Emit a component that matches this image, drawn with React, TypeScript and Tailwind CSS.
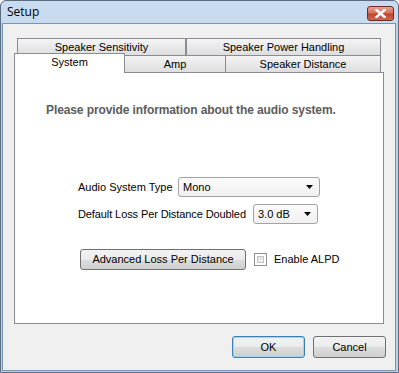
import React from "react";

const font = { fontFamily: '"Liberation Sans", Arial, sans-serif' };

function Tab({ label, className }: { label: string; className: string }) {
  return (
    <div
      className={
        "flex items-center justify-center text-[11px] text-black leading-none border-[#898c95] " +
        className
      }
    >
      {label}
    </div>
  );
}

function Select({ value, width }: { value: string; width: string }) {
  return (
    <div
      className={
        "h-[20px] rounded-[3px] border border-[#a3a3a3] bg-gradient-to-b from-[#fbfbfb] to-[#f0f0f0] flex items-center pl-[4px] pr-[6px] " +
        width
      }
    >
      <span className="flex-1 text-[11px] text-black">{value}</span>
      <svg width="7" height="4" viewBox="0 0 7 4">
        <path d="M0 0 H7 L3.5 4 Z" fill="#000" />
      </svg>
    </div>
  );
}

function Button({ label, className }: { label: string; className: string }) {
  return (
    <div
      className={
        "flex items-center justify-center rounded-[3px] border text-[11px] text-black bg-[linear-gradient(to_bottom,#f2f2f2_0%,#ebebeb_50%,#dddddd_51%,#cfcfcf_100%)] " +
        className
      }
    >
      {label}
    </div>
  );
}

export default function App() {
  return (
    <div style={font} className="w-[399px] h-[373px] bg-white">
      <div className="w-[399px] h-[373px] flex flex-col rounded-t-[6px] border border-[#5b6b80] bg-gradient-to-b from-[#c9dbef] to-[#b3cbe8] overflow-hidden">
        {/* Title bar */}
        <div className="h-[22px] flex items-center pl-[6px] pr-[4px]">
          <span className="flex-1 text-[12px] text-black" style={{ fontFamily: '"Open Sans", "Noto Sans", sans-serif' }}>
            Setup
          </span>
          <div className="w-[27px] h-[15px] mt-[2px] rounded-[3px] border border-[#6e2a22] bg-[linear-gradient(to_bottom,#e8a493_0%,#d2715e_45%,#c1432e_55%,#d06a50_100%)] flex items-center justify-center">
            <svg width="11" height="9" viewBox="0 0 11 9">
              <path d="M1.5 1 L9.5 8 M9.5 1 L1.5 8" stroke="#fff" strokeWidth="2.4" strokeLinecap="square" />
            </svg>
          </div>
        </div>
        {/* Frame + client */}
        <div className="flex-1 flex pl-px pr-[2px] pb-px bg-[#b9d1ea]">
          <div className="flex-1 flex flex-col border border-[#7795b8] bg-[#f0f0f0]">
            {/* Tab control */}
            <div className="ml-[11px] mt-[14px] w-[370px] flex flex-col">
              <div className="flex ml-[3px] h-[17px]">
                <Tab label="Speaker Sensitivity" className="w-[169px] h-[17px] border-l border-t border-r bg-gradient-to-b from-[#f4f4f4] to-[#dedede]" />
                <Tab label="Speaker Power Handling" className="w-[195px] h-[17px] border-l border-t border-r bg-gradient-to-b from-[#f4f4f4] to-[#dedede]" />
              </div>
              <div className="flex items-end h-[19px] -mt-[2px]">
                <Tab label="System" className="relative z-10 w-[111px] h-[20px] -mb-px border-l border-t border-r bg-white pb-[3px]" />
                <Tab label="Amp" className="w-[101px] h-[17px] border-t border-r bg-gradient-to-b from-[#f4f4f4] to-[#dedede]" />
                <Tab label="Speaker Distance" className="w-[155px] h-[17px] border-t border-r bg-gradient-to-b from-[#f4f4f4] to-[#dedede]" />
              </div>
              <div className="w-[370px] h-[252px] border border-[#898c95] bg-white flex flex-col">
                <div className="ml-[31px] mt-[30px] text-[12px] font-bold text-[#5c5c5c] leading-[15px] tracking-[-0.1px]">
                  Please provide information about the audio system.
                </div>
                <div className="flex items-center ml-[63px] mt-[59px]">
                  <span className="w-[100px] text-[11px] text-black">Audio System Type</span>
                  <Select value="Mono" width="w-[142px]" />
                </div>
                <div className="flex items-center ml-[63px] mt-[7px]">
                  <span className="w-[175px] text-[11px] text-black tracking-[-0.1px]">Default Loss Per Distance Doubled</span>
                  <Select value="3.0 dB" width="w-[65px]" />
                </div>
                <div className="flex items-center ml-[65px] mt-[25px]">
                  <Button label="Advanced Loss Per Distance" className="w-[166px] h-[21px] border-[#707070]" />
                  <div className="ml-[8px] w-[13px] h-[13px] border border-[#8f8f8f] bg-white p-[2px]">
                    <div className="w-full h-full bg-gradient-to-br from-[#dcdcdc] to-[#f8f8f8] border border-[#c4c4c4]" />
                  </div>
                  <span className="ml-[7px] text-[11px] text-black">Enable ALPD</span>
                </div>
              </div>
            </div>
            {/* Bottom buttons */}
            <div className="flex justify-end gap-[8px] mt-[12px] mr-[9px]">
              <Button label="OK" className="w-[73px] h-[22px] border-[#3c7fb1] shadow-[inset_0_0_0_1px_#9fd6f1]" />
              <Button label="Cancel" className="w-[73px] h-[22px] border-[#707070]" />
            </div>
          </div>
        </div>
      </div>
    </div>
  );
}
